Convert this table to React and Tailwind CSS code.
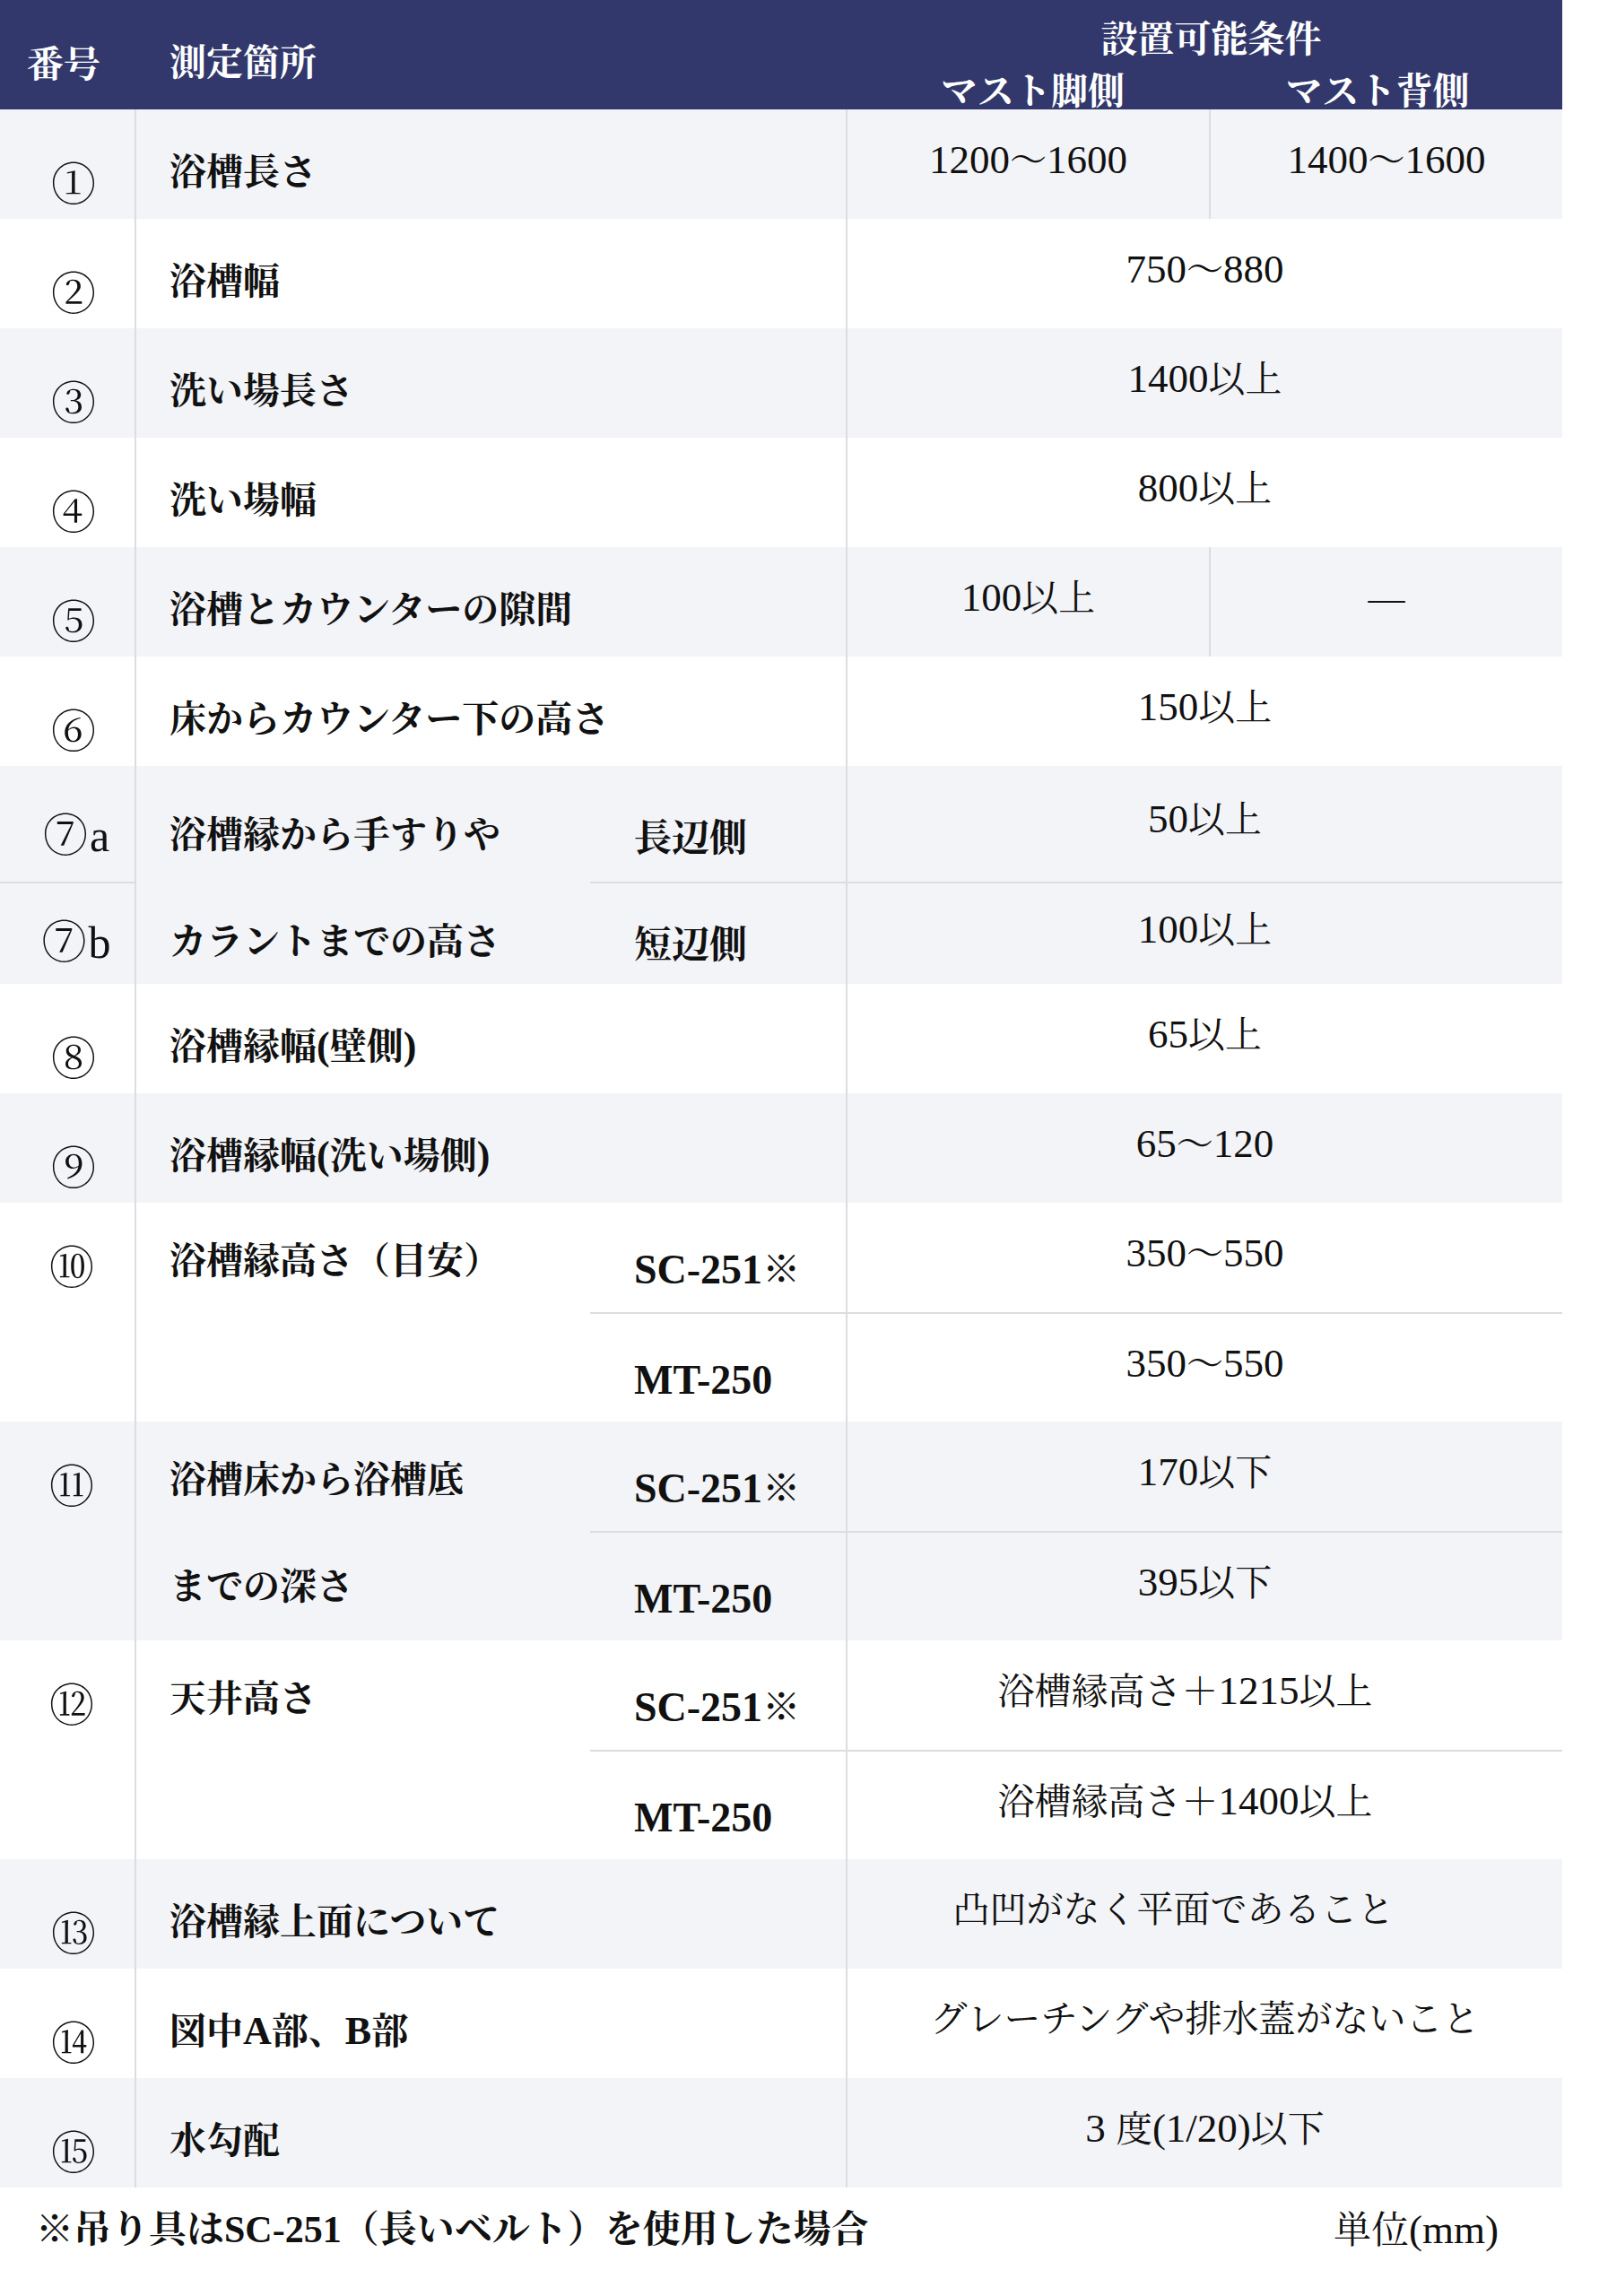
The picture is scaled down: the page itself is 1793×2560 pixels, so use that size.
import React from "react";

const FONT = "font-['Liberation_Serif','Noto_Serif_CJK_JP','Noto_Sans_CJK_JP',serif]";
const GRAY = "bg-[#f3f4f8]";
const WHITE = "bg-white";

function Mixed({ text, latin = "text-[45px]" }) {
  if (typeof text !== "string") return text;
  const parts = text.split(/([\x20-\x7E]+)/).filter((p) => p !== "");
  return (
    <>
      {parts.map((p, i) =>
        /^[\x20-\x7E]+$/.test(p) ? (
          <span key={i} className={`${latin} whitespace-pre`}>{p}</span>
        ) : (
          <span key={i}>{p}</span>
        )
      )}
    </>
  );
}

function Circ({ c, suffix }) {
  return (
    <span className="inline-flex items-baseline">
      <span className="font-['Noto_Serif_CJK_JP','Noto_Sans_CJK_JP',serif] text-[50px] leading-none">{c}</span>
      {suffix ? <span className="text-[50px] leading-none ml-[2px]">{suffix}</span> : null}
    </span>
  );
}

function NumCell({ children, h = "h-[122px]", extra = "pt-[36px] pl-[14px]" }) {
  return (
    <div className={`w-[150px] ${h} flex items-center justify-center leading-none ${extra}`}>
      {children}
    </div>
  );
}

function Label({ children, h = "h-[122px]", extra = "pt-[18px]" }) {
  return (
    <div className={`${h} flex items-center pl-[37px] font-bold text-[41px] leading-none whitespace-nowrap ${extra}`}>
      <Mixed text={children} latin="text-[44px]" />
    </div>
  );
}

function Sub({ children, extra = "pt-[28px]" }) {
  return (
    <div className={`w-[285px] h-full flex items-center pl-[49px] font-bold text-[42px] leading-none whitespace-nowrap ${extra}`}>
      <Mixed text={children} latin="text-[46px]" />
    </div>
  );
}

function Value({ children, extra = "flex-1", pad = "pb-[10px]" }) {
  return (
    <div className={`${extra} h-full border-l-2 border-[#dcdde1] flex items-center justify-center ${pad} text-[41px] leading-none whitespace-nowrap`}>
      <span><Mixed text={children} latin="text-[45px]" /></span>
    </div>
  );
}

function SimpleRow({ bg, num, label, value, value2, vpad }) {
  return (
    <div className={`flex h-[122px] ${bg}`}>
      <NumCell>{num}</NumCell>
      <div className="w-[793px] h-full border-l-2 border-[#dcdde1]">
        <Label>{label}</Label>
      </div>
      {value2 !== undefined ? (
        <>
          <Value extra="w-[405px]">{value}</Value>
          <Value>{value2}</Value>
        </>
      ) : (
        <Value pad={vpad || "pb-[10px]"}>{value}</Value>
      )}
    </div>
  );
}

function SubRowGroup({ bg, num, labels, subs, vpad }) {
  return (
    <div className={`flex ${bg}`}>
      <div className="w-[150px] flex flex-col">
        <NumCell extra="pt-[14px] pl-[10px]">{num}</NumCell>
      </div>
      <div className="w-[508px] border-l-2 border-[#dcdde1] flex flex-col">
        <Label extra="pt-[8px]">{labels[0]}</Label>
        {labels[1] ? <Label extra="pt-[2px]">{labels[1]}</Label> : null}
      </div>
      <div className="w-[1084px] flex flex-col">
        {subs.map((s, i) => (
          <div key={i} className={`flex h-[122px] ${i > 0 ? "border-t-2 border-[#dcdde1]" : ""}`}>
            <Sub>{s[0]}</Sub>
            <Value pad={vpad || "pb-[10px]"}>{s[1]}</Value>
          </div>
        ))}
      </div>
    </div>
  );
}

export default function App() {
  return (
    <div className={`w-[1793px] h-[2560px] bg-white text-[#111] ${FONT}`}>
      <div className="w-[1742px]">
        {/* Header */}
        <div className="flex h-[122px] bg-[#32386b] text-white font-bold">
          <div className="w-[150px] h-full flex items-center pl-[30px] pt-[22px] text-[41px] leading-none">番号</div>
          <div className="w-[793px] h-full flex items-center pl-[39px] pt-[18px] text-[41px] leading-none">測定箇所</div>
          <div className="w-[799px] h-full flex flex-col">
            <div className="pt-[24px] text-center pl-[16px] text-[41px] leading-[40px]">設置可能条件</div>
            <div className="flex mt-[18px] text-[41px] leading-[40px]">
              <div className="w-[405px] text-center pl-[12px]">マスト脚側</div>
              <div className="flex-1 text-center pr-[18px]">マスト背側</div>
            </div>
          </div>
        </div>

        <SimpleRow bg={GRAY} num={<Circ c="①" />} label="浴槽長さ" value="1200〜1600" value2="1400〜1600" />
        <SimpleRow bg={WHITE} num={<Circ c="②" />} label="浴槽幅" value="750〜880" />
        <SimpleRow bg={GRAY} num={<Circ c="③" />} label="洗い場長さ" value="1400以上" />
        <SimpleRow bg={WHITE} num={<Circ c="④" />} label="洗い場幅" value="800以上" />
        <SimpleRow bg={GRAY} num={<Circ c="⑤" />} label="浴槽とカウンターの隙間" value="100以上" value2="—" />
        <SimpleRow bg={WHITE} num={<Circ c="⑥" />} label="床からカウンター下の高さ" value="150以上" />

        {/* Row 7 */}
        <div className={`flex ${GRAY}`}>
          <div className="w-[150px] flex flex-col">
            <NumCell h="h-[129px]" extra="pt-[22px] pl-[20px]"><Circ c="⑦" suffix="a" /></NumCell>
            <NumCell h="h-[114px]" extra="pt-[14px] pl-[20px] border-t-2 border-[#dcdde1]"><Circ c="⑦" suffix="b" /></NumCell>
          </div>
          <div className="w-[508px] border-l-2 border-[#dcdde1] flex flex-col">
            <Label h="h-[129px]" extra="pt-[26px]">浴槽縁から手すりや</Label>
            <Label h="h-[114px]" extra="pt-[20px]">カラントまでの高さ</Label>
          </div>
          <div className="w-[1084px] flex flex-col">
            <div className="flex h-[129px]">
              <Sub extra="pt-[32px]">長辺側</Sub>
              <Value>50以上</Value>
            </div>
            <div className="flex h-[114px] border-t-2 border-[#dcdde1]">
              <Sub extra="pt-[26px]">短辺側</Sub>
              <Value>100以上</Value>
            </div>
          </div>
        </div>

        <SimpleRow bg={WHITE} num={<Circ c="⑧" />} label="浴槽縁幅(壁側)" value="65以上" />
        <SimpleRow bg={GRAY} num={<Circ c="⑨" />} label="浴槽縁幅(洗い場側)" value="65〜120" />

        <SubRowGroup
          bg={WHITE}
          num={<Circ c="⑩" />}
          labels={["浴槽縁高さ（目安）"]}
          subs={[["SC-251※", "350〜550"], ["MT-250", "350〜550"]]}
        />
        <SubRowGroup
          bg={GRAY}
          num={<Circ c="⑪" />}
          labels={["浴槽床から浴槽底", "までの深さ"]}
          subs={[["SC-251※", "170以下"], ["MT-250", "395以下"]]}
        />
        <SubRowGroup
          bg={WHITE}
          num={<Circ c="⑫" />}
          labels={["天井高さ"]}
          vpad="pb-[10px] pr-[44px]"
          subs={[["SC-251※", "浴槽縁高さ＋1215以上"], ["MT-250", "浴槽縁高さ＋1400以上"]]}
        />

        <SimpleRow bg={GRAY} num={<Circ c="⑬" />} label="浴槽縁上面について" value="凸凹がなく平面であること" vpad="pb-[10px] pr-[70px]" />
        <SimpleRow bg={WHITE} num={<Circ c="⑭" />} label="図中A部、B部" value="グレーチングや排水蓋がないこと" />
        <SimpleRow bg={GRAY} num={<Circ c="⑮" />} label="水勾配" value="3 度(1/20)以下" />

        {/* Footer */}
        <div className="flex h-[121px] items-start pt-[26px]">
          <div className="w-[1487px] pl-[40px] font-bold text-[42px] leading-[42px] whitespace-nowrap">
            ※吊り具はSC-251（長いベルト）を使用した場合
          </div>
          <div className="text-[42px] leading-[42px] whitespace-nowrap">
            単位<span className="text-[45px]">(mm)</span>
          </div>
        </div>
      </div>
    </div>
  );
}
